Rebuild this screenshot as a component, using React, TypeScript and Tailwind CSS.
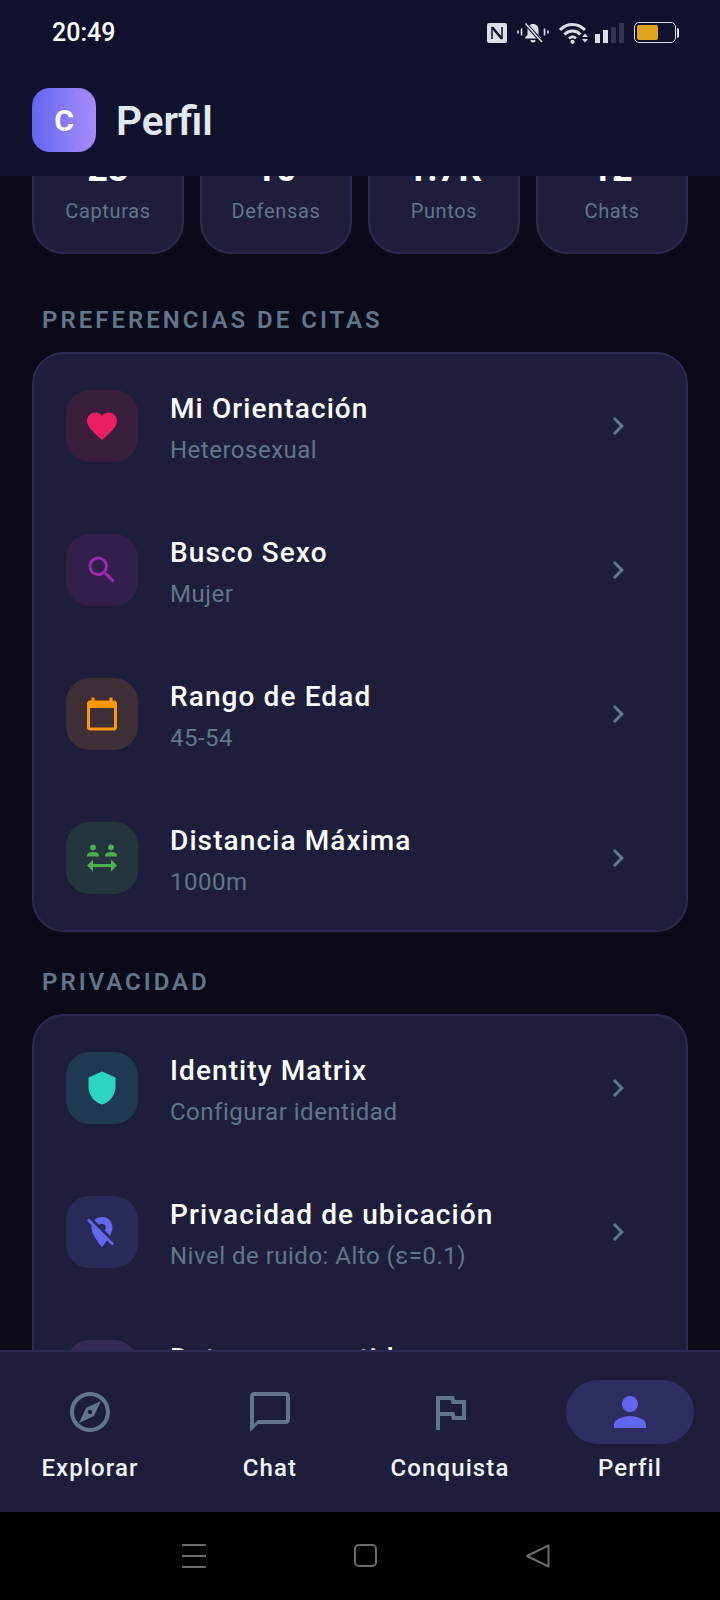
import React from "react";
import {
  MdFavorite,
  MdSearch,
  MdCalendarToday,
  MdSocialDistance,
  MdShield,
  MdLocationOff,
  MdOutlineExplore,
  MdChatBubbleOutline,
  MdOutlineFlag,
  MdPerson,
  MdChevronRight,
  MdShare,
} from "react-icons/md";

type Row = {
  title: string;
  sub: string;
  Icon: React.ComponentType<{ className?: string }>;
  box: string;
  color: string;
};

const prefs: Row[] = [
  { title: "Mi Orientación", sub: "Heterosexual", Icon: MdFavorite, box: "bg-[#3a1e3e]", color: "text-[#e91e63]" },
  { title: "Busco Sexo", sub: "Mujer", Icon: MdSearch, box: "bg-[#321f4b]", color: "text-[#9c27b0]" },
  { title: "Rango de Edad", sub: "45-54", Icon: MdCalendarToday, box: "bg-[#3e2e35]", color: "text-[#ff9800]" },
  { title: "Distancia Máxima", sub: "1000m", Icon: MdSocialDistance, box: "bg-[#25353d]", color: "text-[#4caf50]" },
];

const privacy: Row[] = [
  { title: "Identity Matrix", sub: "Configurar identidad", Icon: MdShield, box: "bg-[#1f3a50]", color: "text-[#2dd4bf]" },
  { title: "Privacidad de ubicación", sub: "Nivel de ruido: Alto (ε=0.1)", Icon: MdLocationOff, box: "bg-[#2a2a58]", color: "text-[#6366f1]" },
  { title: "Datos compartidos", sub: "Gestionar", Icon: MdShare, box: "bg-[#332a55]", color: "text-[#8b5cf6]" },
];

const stats = [
  ["23", "Capturas"],
  ["10", "Defensas"],
  ["1.7K", "Puntos"],
  ["12", "Chats"],
];

function SettingsRow({ r }: { r: Row }) {
  const I = r.Icon;
  return (
    <div className="flex items-center h-[144px] px-8 shrink-0">
      <div className={`w-[72px] h-[72px] rounded-[24px] flex items-center justify-center shrink-0 ${r.box}`}>
        <I className={`w-9 h-9 ${r.color}`} />
      </div>
      <div className="ml-8 flex-1 pt-[4px]">
        <div className="text-[28px] leading-[36px] font-[460] tracking-[1.1px] text-white">{r.title}</div>
        <div className="mt-[7px] text-[24px] leading-[32px] tracking-[0.5px] text-[#64748b]">{r.sub}</div>
      </div>
      <MdChevronRight className="w-9 h-9 text-[#64748b] mr-[18px]" />
    </div>
  );
}

function Section({ title, rows, mt }: { title: string; rows: Row[]; mt: string }) {
  return (
    <section className={mt}>
      <h2 className="pl-[10px] h-[32px] text-[24px] leading-[32px] font-semibold tracking-[3px] text-[#64748b] uppercase">{title}</h2>
      <div className="mt-[16px] rounded-[32px] bg-[#1e1e3c] border-2 border-[#2a2a50]">
        {rows.map((r) => (
          <SettingsRow key={r.title} r={r} />
        ))}
      </div>
    </section>
  );
}

function StatusIcons() {
  return (
    <div className="flex items-center">
      <svg width="20" height="20" viewBox="0 0 20 20" className="mr-[10px]">
        <rect width="20" height="20" rx="2" fill="#dcdee8" />
        <path d="M5 16V4.500h1L14 14M15 4v11.500h-1L6 6" fill="none" stroke="#10112c" strokeWidth="1.500" />
      </svg>
      <svg width="32" height="22" viewBox="0 0 32 22" className="mr-[10px]">
        <path d="M16 2c-3.500 0-5.500 2.500-5.500 6v5L8 15.500v1h16v-1L21.500 13V8C21.500 4.500 19.500 2 16 2z" fill="#dcdee8" />
        <path d="M13.500 18h5a2.500 2.500 0 0 1-5 0z" fill="#dcdee8" />
        <path d="M8 1l17 19" stroke="#10112c" strokeWidth="3.500" />
        <path d="M8.500 1.500l16.500 18.500" stroke="#dcdee8" strokeWidth="1.500" />
        <path d="M1 8.500v3M4.500 6.500v7M27.500 6.500v7M31 8.500v3" stroke="#dcdee8" strokeWidth="1.600" />
      </svg>
      <svg width="29" height="22" viewBox="0 0 29 22" className="mr-[7px]">
        <path d="M1 8c7-7.500 18-7.500 25 0" fill="none" stroke="#dcdee8" strokeWidth="3" />
        <path d="M5.500 12.500c4.500-4.700 11.500-4.700 16 0" fill="none" stroke="#dcdee8" strokeWidth="3" />
        <path d="M10 16.500c2-2.200 5-2.200 7 0" fill="none" stroke="#dcdee8" strokeWidth="2.600" />
        <circle cx="13.500" cy="19.800" r="2.100" fill="#dcdee8" />
        <path d="M23 15l3-3.500 3 3.500zM23 17l3 3.500 3-3.500z" fill="#dcdee8" />
      </svg>
      <div className="flex items-end gap-[3px] h-[20px] mr-[10px]">
        <span className="w-[5px] h-[9px] bg-[#dcdee8]" />
        <span className="w-[5px] h-[13px] bg-[#dcdee8]" />
        <span className="w-[5px] h-[16px] bg-[#33354f]" />
        <span className="w-[5px] h-[20px] bg-[#33354f]" />
      </div>
      <div className="flex items-center">
        <div className="w-[42px] h-[21px] rounded-[5px] border-[1.500px] border-[#dcdee8] p-[2px]">
          <div className="w-[21px] h-full rounded-[2px] bg-[#e0a31c]" />
        </div>
        <div className="w-[2px] h-[10px] ml-[1px] rounded-r-sm bg-[#dcdee8]" />
      </div>
    </div>
  );
}

const nav = [
  { label: "Explorar", Icon: MdOutlineExplore },
  { label: "Chat", Icon: MdChatBubbleOutline },
  { label: "Conquista", Icon: MdOutlineFlag },
  { label: "Perfil", Icon: MdPerson, active: true },
];

export default function App() {
  return (
    <div className="w-[720px] h-[1600px] flex flex-col overflow-hidden bg-[#0a0a1a] font-['Roboto',sans-serif]">
      <header className="h-[176px] shrink-0 bg-[#10112c] flex flex-col">
        <div className="h-[64px] flex items-center justify-between pl-[52px] pr-[41px] pt-[1px]">
          <span className="text-[25px] font-medium text-white">20:49</span>
          <StatusIcons />
        </div>
        <div className="pl-8 pt-[24px] flex items-center">
          <div className="w-16 h-16 rounded-[18px] bg-gradient-to-r from-[#6366f1] to-[#a78bfa] flex items-center justify-center text-white text-[30px] font-bold">
            C
          </div>
          <h1 className="ml-[20px] pt-[2px] text-[40.500px] leading-[52px] font-semibold text-[#e2e8f0]">Perfil</h1>
        </div>
      </header>

      <main className="flex-1 min-h-0 overflow-hidden px-8">
        <div className="mt-[-70px] grid grid-cols-4 gap-4">
          {stats.map(([n, l]) => (
            <div key={l} className="h-[148px] rounded-[32px] bg-[#1e1e3c] border-2 border-[#2a2a50] flex flex-col items-center pt-[32px]">
              <div className="text-[36px] leading-[48px] font-bold text-white mt-[5px]">{n}</div>
              <div className="mt-[4px] text-[20px] leading-[28px] tracking-[0.65px] text-[#64748b]">{l}</div>
            </div>
          ))}
        </div>
        <Section title="Preferencias de Citas" rows={prefs} mt="mt-[50px]" />
        <Section title="Privacidad" rows={privacy} mt="mt-[34px]" />
      </main>

      <nav className="h-[162px] shrink-0 bg-[#1e1e3c] border-t-2 border-[#2a2a50] grid grid-cols-4">
        {nav.map(({ label, Icon, active }) => (
          <div key={label} className="flex flex-col items-center pt-[28px]">
            <div className={`w-[128px] h-16 rounded-[32px] flex items-center justify-center ${active ? "bg-[#2d2d62]" : ""}`}>
              <Icon className={`w-12 h-12 ${active ? "text-[#6366f1]" : "text-[#64748b]"}`} />
            </div>
            <div className="mt-[8px] text-[24px] leading-[32px] font-[460] tracking-[1.1px] text-[#f1f5f9]">{label}</div>
          </div>
        ))}
      </nav>

      <div className="h-[88px] shrink-0 bg-black flex items-center">
        <div className="ml-[182px] w-[24px] flex flex-col gap-[9px] mt-[-1px]">
          <span className="h-[2px] bg-[#6b6b6b]" />
          <span className="h-[2px] bg-[#6b6b6b]" />
          <span className="h-[2px] bg-[#6b6b6b]" />
        </div>
        <div className="ml-[148px] w-[23px] h-[23px] rounded-[5px] border-2 border-[#6b6b6b] mt-[-1px]" />
        <svg width="26" height="26" viewBox="0 0 26 26" className="ml-[148px] mt-[-1px]">
          <path d="M23.500 2.500v21L2 13z" fill="none" stroke="#6b6b6b" strokeWidth="2" strokeLinejoin="round" />
        </svg>
      </div>
    </div>
  );
}
